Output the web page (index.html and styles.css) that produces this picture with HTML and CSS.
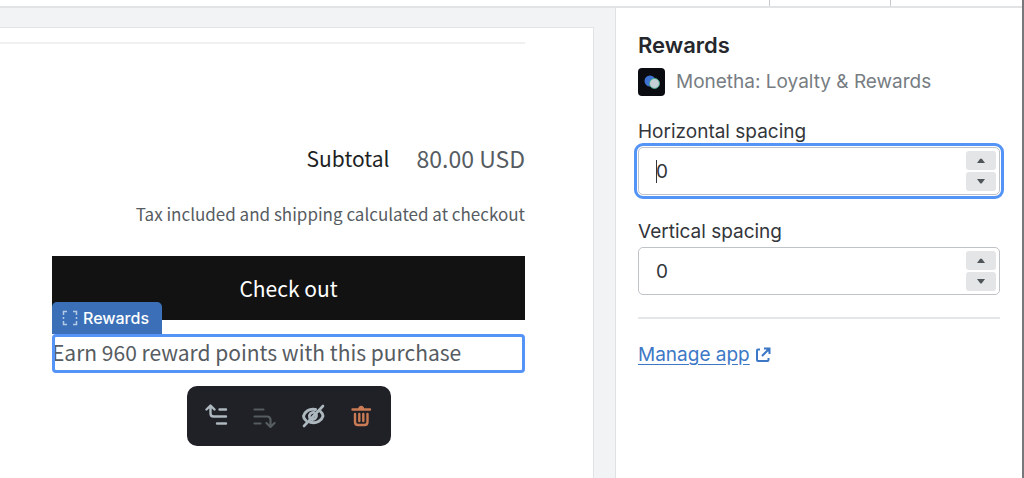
FILE: index.html
```html
<!DOCTYPE html>
<html lang="en">
<head>
    <meta charset="UTF-8">
    <meta name="viewport" content="width=device-width, initial-scale=1.0">
    <title>Theme editor - Rewards</title>
    <link rel="stylesheet" href="styles.css">
</head>
<body>

    <div class="topbar">
        <div class="topbar-cell"></div>
        <div class="topbar-cell topbar-end"></div>
    </div>

    <div class="editor">
        <main class="canvas">
            <div class="preview">
                <hr class="cart-line">
                <div class="cart">
                    <div class="totals">
                        <h2 class="totals-label">Subtotal</h2>
                        <p class="totals-value">80.00 USD</p>
                    </div>
                    <p class="tax-note">Tax included and shipping calculated at checkout</p>
                    <button type="button" class="checkout">Check out</button>

                    <div class="block">
                        <!-- Tab on top of the selected block -->
                        <div class="block-tab">
                            <svg width="16" height="16" viewBox="0 0 16 16" fill="none" stroke="currentColor" stroke-width="1.5">
                                <path d="M1.500 5V1.500H5M11 1.500h3.500V5M14.500 11v3.500H11M5 14.500H1.500V11M1.500 7v2M14.500 7v2"/>
                            </svg>
                            Rewards
                        </div>
                        <p class="block-text">Earn 960 reward points with this purchase</p>
                    </div>

                    <div class="toolbar">
                        <button type="button" aria-label="Move up">
                            <svg width="24" height="24" viewBox="0 0 24 24" fill="none" stroke="currentColor" stroke-width="2.4" stroke-linecap="round" stroke-linejoin="round">
                                <path d="M1.500 5.500L5.500 1.500l4 4M5.500 2v7.500q0 3 3 3H21M14.500 5.500H21M12 19.500h9"/>
                            </svg>
                        </button>
                        <button type="button" aria-label="Move down" class="dim">
                            <svg width="24" height="24" viewBox="0 0 24 24" fill="none" stroke="currentColor" stroke-width="2.200" stroke-linecap="round" stroke-linejoin="round">
                                <path d="M1.500 5.500h9M1.500 12.500H14q3.500 0 3.500 3.500v7M13.500 19l4 4 4-4M1.500 19.500h6"/>
                            </svg>
                        </button>
                        <button type="button" aria-label="Hide">
                            <svg width="24" height="24" viewBox="0 0 24 24" fill="none" stroke="currentColor" stroke-linecap="round">
                                <path d="M14.500 5.500C8 4 3.500 8 2.500 12c0 1.500.8 3 2.500 4.500M9.500 18.300C16 20 21 16 22 12c0-1.500-.8-3-2.500-4.500" stroke-width="3"/>
                                <path d="M8.500 13.500a4 4 0 0 1 5-5M15.500 11a4 4 0 0 1-4.500 4.500" stroke-width="2.800"/>
                                <path d="M3 22L22 2" stroke-width="2.600"/>
                            </svg>
                        </button>
                        <button type="button" aria-label="Delete" class="danger">
                            <svg width="24" height="24" viewBox="0 0 24 24" fill="none" stroke="currentColor" stroke-width="2.400" stroke-linecap="round" stroke-linejoin="round">
                                <path d="M3.500 5.500h17.500M10.500 4q1.700-2 3.400 0M6 10v8q0 3 3 3h6.500q3 0 3-3v-8M10.300 10v7M14.300 10v7"/>
                            </svg>
                        </button>
                    </div>
                </div>
            </div>
        </main>

        <aside class="sidebar">
            <h1 class="title">Rewards</h1>
            <div class="app">
                <svg width="28" height="28" viewBox="0 0 28 28">
                    <rect width="27" height="28" rx="4" fill="#0b0c12"/>
                    <circle cx="12" cy="13" r="5.500" fill="#3d73d3"/>
                    <circle cx="16.500" cy="15.500" r="5" fill="#c3cfd4" stroke="#43a68a"/>
                </svg>
                <span>Monetha: Loyalty &amp; Rewards</span>
            </div>

            <label for="horizontal">Horizontal spacing</label>
            <div class="field focused">
                <input type="text" inputmode="numeric" id="horizontal" value="0">
                <span class="caret"></span>
                <div class="stepper">
                    <button type="button" aria-label="Increase horizontal spacing"><svg width="8" height="5" viewBox="0 0 8 5"><path d="M0 5L3 1q1-1 2 0l3 4z"/></svg></button>
                    <button type="button" aria-label="Decrease horizontal spacing"><svg width="8" height="5" viewBox="0 0 8 5"><path d="M0 0l3 4q1 1 2 0l3-4z"/></svg></button>
                </div>
            </div>

            <label for="vertical">Vertical spacing</label>
            <div class="field">
                <input type="text" inputmode="numeric" id="vertical" value="0">
                <div class="stepper">
                    <button type="button" aria-label="Increase vertical spacing"><svg width="8" height="5" viewBox="0 0 8 5"><path d="M0 5L3 1q1-1 2 0l3 4z"/></svg></button>
                    <button type="button" aria-label="Decrease vertical spacing"><svg width="8" height="5" viewBox="0 0 8 5"><path d="M0 0l3 4q1 1 2 0l3-4z"/></svg></button>
                </div>
            </div>

            <hr class="divider">
            <a href="#" class="manage">
                <span>Manage app</span>
                <svg width="16" height="16" viewBox="0 0 16 16" fill="none" stroke="currentColor" stroke-width="2">
                    <path d="M5 2.500H3Q2 2.500 2 3.500v9.500q0 1 1 1h9.500q1 0 1-1v-2M9 1.500h5.500V7M14 2L7 9"/>
                    <path d="M10 1h5v5z" fill="currentColor" stroke="none"/>
                </svg>
            </a>
        </aside>
    </div>

</body>
</html>
```

FILE: styles.css
```css
* { box-sizing: border-box; }
body { font-family: 'Inter', sans-serif; background: white; margin: 0; min-height: 100vh; display: flex; flex-direction: column; border-right: 2px solid #77787b; overflow: hidden; }
h1, h2, p, hr { margin: 0; }
button { border: 0; padding: 0; font: inherit; cursor: pointer; }
svg { display: block; flex: none; }

.topbar { height: 8px; display: flex; justify-content: flex-end; border-bottom: 2px solid #e1e3e5; }
.topbar-cell { width: 121px; border-left: 1px solid #c9cbce; }
.topbar-end { width: 132px; }
.editor { flex: 1; display: flex; }

/* Store preview */
.canvas { flex: 1; display: flex; background: #f1f3f5; padding: 19px 21px 0 0; }
.preview { flex: 1; background: white; border: 1px solid #e1e3e6; border-width: 1px 1px 0 0; padding: 14px 68px 0 0; font-family: 'Noto Sans CJK SC', sans-serif; color: #565c62; }
.cart-line { border: 0; height: 2px; background: #f0f0f1; }
.cart { padding-left: 52px; }
.totals { display: flex; justify-content: flex-end; align-items: center; gap: 27px; margin-top: 98px; line-height: 32px; }
.totals-label { font-size: 21px; font-weight: 400; color: #1d1f24; }
.totals-value { font-size: 23px; }
.tax-note { font-size: 17px; line-height: 24px; margin-top: 28px; text-align: right; }
.checkout { display: block; width: 100%; height: 64px; margin-top: 30px; background: #121212; color: white; font-size: 21px; }

.block { position: relative; margin-top: 14px; padding: 2px 0 4px; outline: 3px solid #5494f7; outline-offset: -3px; border-radius: 4px; }
.block-text { font-size: 21px; line-height: 33px; }
.block-tab { position: absolute; left: 0; bottom: 100%; height: 32px; padding: 0 13px 0 10px; display: flex; align-items: center; gap: 5px; background: #3b70b8; color: white; border-radius: 5px 5px 0 0; font-family: 'Inter', sans-serif; font-size: 16px; font-weight: 500; }
.block-tab svg { color: #b5cae5; }
.toolbar { width: fit-content; height: 60px; margin: 13px auto 0; padding: 0 18px; display: flex; align-items: center; gap: 24px; background: #202027; border-radius: 10px; }
.toolbar button { background: none; color: #adb8bf; }
.toolbar .dim { color: #555d61; }
.toolbar .danger { color: #c97b54; }

/* Settings */
.sidebar { flex: 0 0 407px; border-left: 1px solid #dfe1e4; padding: 24px 22px 0; font-size: 19px; line-height: 24px; color: #33363b; }
.title { font-size: 22px; line-height: 26px; font-weight: 600; color: #25272c; }
.app { display: flex; align-items: center; gap: 10px; margin: 10px 0 24px; color: #777d82; }
label { display: block; }
.field { position: relative; display: flex; align-items: center; height: 48px; margin: 3px 0 25px; padding: 3px; border: 1px solid #bfc2c6; border-radius: 5px; }
.field input { flex: 1; min-width: 0; border: 0; outline: 0; background: none; padding: 2px 14px 0; font: inherit; color: inherit; }
.focused { outline: 3px solid #5494f7; outline-offset: 1px; }
.caret { position: absolute; left: 17px; top: 12px; width: 1px; height: 23px; background: #33363b; }
.stepper { display: flex; flex-direction: column; gap: 2px; }
.stepper button { width: 30px; height: 19px; display: flex; align-items: center; justify-content: center; background: #e3e5e7; border-radius: 3px; }
.stepper svg { fill: #505559; }
.divider { border: 0; height: 2px; background: #e5e6e8; margin: -3px 0 24px; }
.manage { display: inline-flex; align-items: center; gap: 5px; color: #3d78c6; text-decoration: none; }
.manage span { text-decoration: underline; text-underline-offset: 3px; }
```
